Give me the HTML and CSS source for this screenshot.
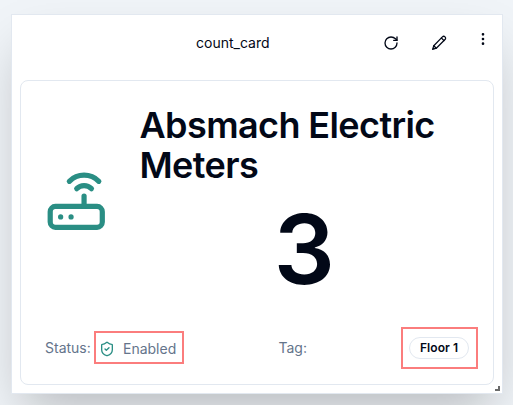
FILE: index.html
```html
<!DOCTYPE html>
<html lang="en">
<head>
<meta charset="utf-8">
<title>count_card</title>
<link rel="stylesheet" href="styles.css">
</head>
<body>
<section class="widget">
  <header class="bar">
    <span class="name">count_card</span>
    <svg class="icon refresh" viewBox="0 0 24 24"><path d="M21 12a9 9 0 1 1-9-9c2.52 0 4.93 1 6.74 2.74L21 8"/><path d="M21 3v5h-5"/></svg>
    <svg class="icon edit" viewBox="0 0 16 16"><path d="M11.4 1.9c.8-.8 1.8-.8 2.6 0s.8 1.8 0 2.6L5.3 13.2 1.6 14.4l1.2-3.7Z"/><path d="m10.4 3 2.6 2.6M2.8 10.7l2.5 2.5"/></svg>
    <svg class="icon more" viewBox="0 0 24 24"><circle cx="12" cy="12" r="1"/><circle cx="12" cy="5" r="1"/><circle cx="12" cy="19" r="1"/></svg>
  </header>
  <div class="card">
    <div class="main">
      <svg class="router" viewBox="0 0 24 24"><rect width="20" height="8" x="2" y="14" rx="2"/><path d="M6.01 18H6"/><path d="M10.01 18H10"/><path d="M15 10v4"/><path d="M17.84 7.17a4 4 0 0 0-5.66 0"/><path d="M20.66 4.34a8 8 0 0 0-11.31 0"/></svg>
      <div class="info">
        <h1 class="title">Absmach Electric Meters</h1>
        <div class="count">3</div>
      </div>
    </div>
    <div class="meta">
      <span class="label">Status:</span>
      <div class="mark status">
        <svg class="shield" viewBox="0 0 24 24"><path d="M20 13c0 5-3.5 7.5-7.66 8.95a1 1 0 0 1-.67-.01C7.5 20.5 4 18 4 13V6a1 1 0 0 1 1-1c2 0 4.5-1.2 6.24-2.72a1.17 1.17 0 0 1 1.52 0C14.51 3.81 17 5 19 5a1 1 0 0 1 1 1z"/><path d="m9 12 2 2 4-4"/></svg>
        <span>Enabled</span>
      </div>
      <span class="label tag-label">Tag:</span>
      <div class="mark tag"><span class="badge">Floor 1</span></div>
    </div>
  </div>
  <span class="handle"></span>
</section>
</body>
</html>
```
FILE: styles.css
```css
* { box-sizing: border-box; }
body {
  margin: 0;
  height: 405px;
  padding: 14px 10px 0 11px;
  overflow: hidden;
  background: #f0f4f8;
  color: #020817;
  font-family: Inter, sans-serif;
}
svg {
  fill: none;
  stroke: currentColor;
  stroke-width: 2;
  stroke-linecap: round;
  stroke-linejoin: round;
}
.widget {
  position: relative;
  height: 380px;
  padding: 0 8px;
  border: 1px solid #e2e8f0;
  background: #fff;
  box-shadow: 0 25px 50px -12px rgba(0, 0, 0, .25);
}
.bar {
  display: flex;
  align-items: center;
  height: 65px;
  padding: 0 0 10px 176px;
}
.bar > *, .meta > *, svg { flex: none; }
.name { width: 187px; font-size: 14px; line-height: 20px; }
.icon { width: 16px; height: 16px; }
.edit { margin-left: 32px; stroke-width: 1.25; }
.more { margin: 0 0 8px 28px; }
.card {
  height: 305px;
  padding: 24px;
  border: 1px solid #e2e8f0;
  border-radius: 8px;
}
.main { display: flex; align-items: center; height: 191px; }
.router { width: 62.5px; height: 62.5px; margin-top: 1px; color: #2a8e84; }
.info { flex: 1; margin-left: 32px; }
.title {
  margin: 0;
  font-size: 36px;
  font-weight: 600;
  line-height: 40px;
  letter-spacing: -.6px;
}
.count {
  margin-top: 16px;
  height: 95px;
  text-align: center;
  font-size: 96px;
  font-weight: 600;
  line-height: 96px;
}
.meta {
  display: flex;
  align-items: center;
  height: 41px;
  margin-top: 31px;
  color: #64748b;
  font-size: 14px;
  line-height: 20px;
}
.label { width: 49px; }
.mark {
  display: flex;
  align-items: center;
  border: 2px solid #fb7d7d;
}
.status { width: 90px; height: 33px; padding: 3px 0 0 3px; gap: 8px; }
.shield { width: 16px; height: 16px; color: #2a8e84; }
.tag-label { margin-left: 94.5px; width: 122.5px; }
.tag { width: 77px; height: 42px; padding: 1px 1px 0 0; justify-content: center; }
.badge {
  padding: 2px 10px;
  border: 1px solid #e2e8f0;
  border-radius: 11px;
  color: #020817;
  font-size: 12px;
  font-weight: 600;
  line-height: 16px;
  letter-spacing: .05px;
}
.handle {
  position: absolute;
  right: 2px;
  bottom: 2px;
  width: 5px;
  height: 5px;
  border: solid #6b6b6b;
  border-width: 0 2px 2px 0;
}
```
